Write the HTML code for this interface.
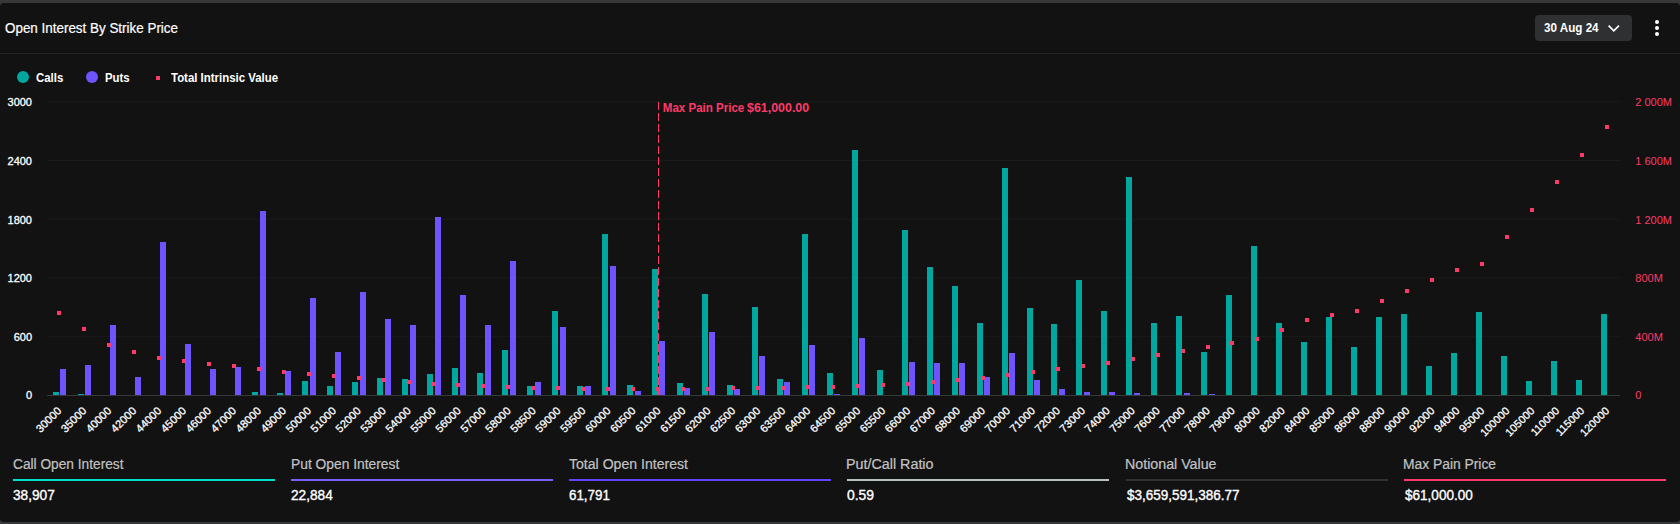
<!DOCTYPE html>
<html lang="en"><head><meta charset="utf-8"><title>Open Interest By Strike Price</title>
<style>
html,body{margin:0;padding:0;background:#37383a;overflow:hidden}
body{width:1680px;height:524px;position:relative;font-family:"Liberation Sans", Arial, sans-serif}
.card{position:absolute;left:0;top:3px;width:1680px;height:519px;background:#121212;border-radius:4px}
.wrap{position:absolute;left:0;top:0;width:1680px;height:524px}
.t{position:absolute;white-space:nowrap;line-height:20px;height:20px;transform-origin:0 50%}
.btn{position:absolute;left:1535px;top:15px;width:97px;height:26px;border-radius:4px;background:#2e3032}
.dot{position:absolute;left:1654.5px;width:4px;height:4px;border-radius:50%;background:#fff}
.hr{position:absolute;left:0;top:53px;width:1680px;height:1px;background:#232527}
.circ{position:absolute;width:12px;height:12px;border-radius:50%}
.med{stroke:#fff;stroke-width:0.3px}
</style></head>
<body>
<div class="card"></div>
<div class="wrap">
<div class="t" style="left:5px;top:18.15px;font-size:14px;font-weight:400;color:#fff;transform:scaleX(0.9584);-webkit-text-stroke:0.2px #fff;">Open Interest By Strike Price</div>
<div class="btn"></div>
<div class="t" style="left:1543.5px;top:17.54px;font-size:12px;font-weight:700;color:#fff;transform:scaleX(0.9708);">30 Aug 24</div>
<svg style="position:absolute;left:1605.6px;top:22px" width="16" height="14" viewBox="0 0 16 14"><path d="M2.6 3.6 L7.8 8.8 L13 3.6" fill="none" stroke="#fff" stroke-width="1.7"/></svg>
<div class="dot" style="top:20px"></div><div class="dot" style="top:26px"></div><div class="dot" style="top:32px"></div>
<div class="hr"></div>
<div class="circ" style="left:17px;top:71px;background:#00a79f"></div>
<div class="t" style="left:35.5px;top:67.84px;font-size:12px;font-weight:700;color:#fff;transform:scaleX(0.9518);">Calls</div>
<div class="circ" style="left:85.6px;top:71px;background:#6e54ff"></div>
<div class="t" style="left:104.5px;top:67.84px;font-size:12px;font-weight:700;color:#fff;transform:scaleX(0.9460);">Puts</div>
<div style="position:absolute;left:156px;top:76px;width:4px;height:4px;background:#fd3a69"></div>
<div class="t" style="left:171px;top:67.84px;font-size:12px;font-weight:700;color:#fff;transform:scaleX(0.9514);">Total Intrinsic Value</div>
<svg class="chart" width="1680" height="390" viewBox="0 60 1680 390" style="position:absolute;left:0;top:60px;font-family:'Liberation Sans',Arial,sans-serif">
<line x1="47.0" x2="1620.0" y1="101.90" y2="101.90" stroke="#1b1b1b" stroke-width="1"/>
<line x1="47.0" x2="1620.0" y1="160.50" y2="160.50" stroke="#1b1b1b" stroke-width="1"/>
<line x1="47.0" x2="1620.0" y1="219.10" y2="219.10" stroke="#1b1b1b" stroke-width="1"/>
<line x1="47.0" x2="1620.0" y1="277.70" y2="277.70" stroke="#1b1b1b" stroke-width="1"/>
<line x1="47.0" x2="1620.0" y1="336.30" y2="336.30" stroke="#1b1b1b" stroke-width="1"/>
<rect x="53" y="392" width="6" height="3.5" fill="#00a79f"/>
<rect x="60" y="369" width="6" height="26.5" fill="#6e54ff"/>
<rect x="78" y="394" width="6" height="1.5" fill="#00a79f"/>
<rect x="85" y="365" width="6" height="30.5" fill="#6e54ff"/>
<rect x="110" y="325" width="6" height="70.5" fill="#6e54ff"/>
<rect x="135" y="377" width="6" height="18.5" fill="#6e54ff"/>
<rect x="160" y="242" width="6" height="153.5" fill="#6e54ff"/>
<rect x="185" y="344" width="6" height="51.5" fill="#6e54ff"/>
<rect x="210" y="369" width="6" height="26.5" fill="#6e54ff"/>
<rect x="235" y="367" width="6" height="28.5" fill="#6e54ff"/>
<rect x="252" y="392" width="6" height="3.5" fill="#00a79f"/>
<rect x="260" y="211" width="6" height="184.5" fill="#6e54ff"/>
<rect x="277" y="393" width="6" height="2.5" fill="#00a79f"/>
<rect x="285" y="371" width="6" height="24.5" fill="#6e54ff"/>
<rect x="302" y="381" width="6" height="14.5" fill="#00a79f"/>
<rect x="310" y="298" width="6" height="97.5" fill="#6e54ff"/>
<rect x="327" y="386" width="6" height="9.5" fill="#00a79f"/>
<rect x="335" y="352" width="6" height="43.5" fill="#6e54ff"/>
<rect x="352" y="382" width="6" height="13.5" fill="#00a79f"/>
<rect x="360" y="292" width="6" height="103.5" fill="#6e54ff"/>
<rect x="377" y="378" width="6" height="17.5" fill="#00a79f"/>
<rect x="385" y="319" width="6" height="76.5" fill="#6e54ff"/>
<rect x="402" y="379" width="6" height="16.5" fill="#00a79f"/>
<rect x="410" y="325" width="6" height="70.5" fill="#6e54ff"/>
<rect x="427" y="374" width="6" height="21.5" fill="#00a79f"/>
<rect x="435" y="217" width="6" height="178.5" fill="#6e54ff"/>
<rect x="452" y="368" width="6" height="27.5" fill="#00a79f"/>
<rect x="460" y="295" width="6" height="100.5" fill="#6e54ff"/>
<rect x="477" y="373" width="6" height="22.5" fill="#00a79f"/>
<rect x="485" y="325" width="6" height="70.5" fill="#6e54ff"/>
<rect x="502" y="350" width="6" height="45.5" fill="#00a79f"/>
<rect x="510" y="261" width="6" height="134.5" fill="#6e54ff"/>
<rect x="527" y="386" width="6" height="9.5" fill="#00a79f"/>
<rect x="535" y="382" width="6" height="13.5" fill="#6e54ff"/>
<rect x="552" y="311" width="6" height="84.5" fill="#00a79f"/>
<rect x="560" y="327" width="6" height="68.5" fill="#6e54ff"/>
<rect x="577" y="386" width="6" height="9.5" fill="#00a79f"/>
<rect x="585" y="386" width="6" height="9.5" fill="#6e54ff"/>
<rect x="602" y="234" width="6" height="161.5" fill="#00a79f"/>
<rect x="610" y="266" width="6" height="129.5" fill="#6e54ff"/>
<rect x="627" y="385" width="6" height="10.5" fill="#00a79f"/>
<rect x="635" y="391" width="6" height="4.5" fill="#6e54ff"/>
<rect x="652" y="269" width="6" height="126.5" fill="#00a79f"/>
<rect x="659" y="341" width="6" height="54.5" fill="#6e54ff"/>
<rect x="677" y="383" width="6" height="12.5" fill="#00a79f"/>
<rect x="684" y="388" width="6" height="7.5" fill="#6e54ff"/>
<rect x="702" y="294" width="6" height="101.5" fill="#00a79f"/>
<rect x="709" y="332" width="6" height="63.5" fill="#6e54ff"/>
<rect x="727" y="385" width="6" height="10.5" fill="#00a79f"/>
<rect x="734" y="389" width="6" height="6.5" fill="#6e54ff"/>
<rect x="752" y="307" width="6" height="88.5" fill="#00a79f"/>
<rect x="759" y="356" width="6" height="39.5" fill="#6e54ff"/>
<rect x="777" y="379" width="6" height="16.5" fill="#00a79f"/>
<rect x="784" y="382" width="6" height="13.5" fill="#6e54ff"/>
<rect x="802" y="234" width="6" height="161.5" fill="#00a79f"/>
<rect x="809" y="345" width="6" height="50.5" fill="#6e54ff"/>
<rect x="827" y="373" width="6" height="22.5" fill="#00a79f"/>
<rect x="834" y="394" width="6" height="1.5" fill="#6e54ff"/>
<rect x="852" y="150" width="6" height="245.5" fill="#00a79f"/>
<rect x="859" y="338" width="6" height="57.5" fill="#6e54ff"/>
<rect x="877" y="370" width="6" height="25.5" fill="#00a79f"/>
<rect x="902" y="230" width="6" height="165.5" fill="#00a79f"/>
<rect x="909" y="362" width="6" height="33.5" fill="#6e54ff"/>
<rect x="927" y="267" width="6" height="128.5" fill="#00a79f"/>
<rect x="934" y="363" width="6" height="32.5" fill="#6e54ff"/>
<rect x="952" y="286" width="6" height="109.5" fill="#00a79f"/>
<rect x="959" y="363" width="6" height="32.5" fill="#6e54ff"/>
<rect x="977" y="323" width="6" height="72.5" fill="#00a79f"/>
<rect x="984" y="377" width="6" height="18.5" fill="#6e54ff"/>
<rect x="1002" y="168" width="6" height="227.5" fill="#00a79f"/>
<rect x="1009" y="353" width="6" height="42.5" fill="#6e54ff"/>
<rect x="1027" y="308" width="6" height="87.5" fill="#00a79f"/>
<rect x="1034" y="380" width="6" height="15.5" fill="#6e54ff"/>
<rect x="1051" y="324" width="6" height="71.5" fill="#00a79f"/>
<rect x="1059" y="389" width="6" height="6.5" fill="#6e54ff"/>
<rect x="1076" y="280" width="6" height="115.5" fill="#00a79f"/>
<rect x="1084" y="392" width="6" height="3.5" fill="#6e54ff"/>
<rect x="1101" y="311" width="6" height="84.5" fill="#00a79f"/>
<rect x="1109" y="392" width="6" height="3.5" fill="#6e54ff"/>
<rect x="1126" y="177" width="6" height="218.5" fill="#00a79f"/>
<rect x="1134" y="393" width="6" height="2.5" fill="#6e54ff"/>
<rect x="1151" y="323" width="6" height="72.5" fill="#00a79f"/>
<rect x="1176" y="316" width="6" height="79.5" fill="#00a79f"/>
<rect x="1184" y="393" width="6" height="2.5" fill="#6e54ff"/>
<rect x="1201" y="352" width="6" height="43.5" fill="#00a79f"/>
<rect x="1209" y="394" width="6" height="1.5" fill="#6e54ff"/>
<rect x="1226" y="295" width="6" height="100.5" fill="#00a79f"/>
<rect x="1251" y="246" width="6" height="149.5" fill="#00a79f"/>
<rect x="1276" y="323" width="6" height="72.5" fill="#00a79f"/>
<rect x="1301" y="342" width="6" height="53.5" fill="#00a79f"/>
<rect x="1326" y="317" width="6" height="78.5" fill="#00a79f"/>
<rect x="1351" y="347" width="6" height="48.5" fill="#00a79f"/>
<rect x="1376" y="317" width="6" height="78.5" fill="#00a79f"/>
<rect x="1401" y="314" width="6" height="81.5" fill="#00a79f"/>
<rect x="1426" y="366" width="6" height="29.5" fill="#00a79f"/>
<rect x="1451" y="353" width="6" height="42.5" fill="#00a79f"/>
<rect x="1476" y="312" width="6" height="83.5" fill="#00a79f"/>
<rect x="1501" y="356" width="6" height="39.5" fill="#00a79f"/>
<rect x="1526" y="381" width="6" height="14.5" fill="#00a79f"/>
<rect x="1551" y="361" width="6" height="34.5" fill="#00a79f"/>
<rect x="1576" y="380" width="6" height="15.5" fill="#00a79f"/>
<rect x="1601" y="314" width="6" height="81.5" fill="#00a79f"/>
<line x1="47.0" x2="1620.0" y1="395.5" y2="395.5" stroke="#383838" stroke-width="1"/>
<rect x="57" y="311" width="4" height="4" fill="#fd3a69"/>
<rect x="82" y="327" width="4" height="4" fill="#fd3a69"/>
<rect x="107" y="343" width="4" height="4" fill="#fd3a69"/>
<rect x="132" y="350" width="4" height="4" fill="#fd3a69"/>
<rect x="157" y="356" width="4" height="4" fill="#fd3a69"/>
<rect x="182" y="359" width="4" height="4" fill="#fd3a69"/>
<rect x="207" y="362" width="4" height="4" fill="#fd3a69"/>
<rect x="232" y="364" width="4" height="4" fill="#fd3a69"/>
<rect x="257" y="367" width="4" height="4" fill="#fd3a69"/>
<rect x="282" y="370" width="4" height="4" fill="#fd3a69"/>
<rect x="307" y="372" width="4" height="4" fill="#fd3a69"/>
<rect x="332" y="374" width="4" height="4" fill="#fd3a69"/>
<rect x="357" y="376" width="4" height="4" fill="#fd3a69"/>
<rect x="382" y="378" width="4" height="4" fill="#fd3a69"/>
<rect x="407" y="380" width="4" height="4" fill="#fd3a69"/>
<rect x="432" y="382" width="4" height="4" fill="#fd3a69"/>
<rect x="456" y="383" width="4" height="4" fill="#fd3a69"/>
<rect x="481" y="384" width="4" height="4" fill="#fd3a69"/>
<rect x="506" y="385" width="4" height="4" fill="#fd3a69"/>
<rect x="531" y="386" width="4" height="4" fill="#fd3a69"/>
<rect x="556" y="386" width="4" height="4" fill="#fd3a69"/>
<rect x="581" y="387" width="4" height="4" fill="#fd3a69"/>
<rect x="606" y="387" width="4" height="4" fill="#fd3a69"/>
<rect x="631" y="387" width="4" height="4" fill="#fd3a69"/>
<rect x="656" y="387" width="4" height="4" fill="#fd3a69"/>
<rect x="681" y="387" width="4" height="4" fill="#fd3a69"/>
<rect x="706" y="387" width="4" height="4" fill="#fd3a69"/>
<rect x="731" y="386" width="4" height="4" fill="#fd3a69"/>
<rect x="756" y="386" width="4" height="4" fill="#fd3a69"/>
<rect x="781" y="386" width="4" height="4" fill="#fd3a69"/>
<rect x="806" y="385" width="4" height="4" fill="#fd3a69"/>
<rect x="831" y="385" width="4" height="4" fill="#fd3a69"/>
<rect x="856" y="384" width="4" height="4" fill="#fd3a69"/>
<rect x="881" y="383" width="4" height="4" fill="#fd3a69"/>
<rect x="906" y="382" width="4" height="4" fill="#fd3a69"/>
<rect x="931" y="380" width="4" height="4" fill="#fd3a69"/>
<rect x="956" y="378" width="4" height="4" fill="#fd3a69"/>
<rect x="981" y="376" width="4" height="4" fill="#fd3a69"/>
<rect x="1006" y="373" width="4" height="4" fill="#fd3a69"/>
<rect x="1031" y="370" width="4" height="4" fill="#fd3a69"/>
<rect x="1056" y="367" width="4" height="4" fill="#fd3a69"/>
<rect x="1081" y="364" width="4" height="4" fill="#fd3a69"/>
<rect x="1106" y="361" width="4" height="4" fill="#fd3a69"/>
<rect x="1131" y="357" width="4" height="4" fill="#fd3a69"/>
<rect x="1156" y="353" width="4" height="4" fill="#fd3a69"/>
<rect x="1181" y="349" width="4" height="4" fill="#fd3a69"/>
<rect x="1206" y="345" width="4" height="4" fill="#fd3a69"/>
<rect x="1230" y="341" width="4" height="4" fill="#fd3a69"/>
<rect x="1255" y="337" width="4" height="4" fill="#fd3a69"/>
<rect x="1280" y="328" width="4" height="4" fill="#fd3a69"/>
<rect x="1305" y="318" width="4" height="4" fill="#fd3a69"/>
<rect x="1330" y="313" width="4" height="4" fill="#fd3a69"/>
<rect x="1355" y="309" width="4" height="4" fill="#fd3a69"/>
<rect x="1380" y="299" width="4" height="4" fill="#fd3a69"/>
<rect x="1405" y="289" width="4" height="4" fill="#fd3a69"/>
<rect x="1430" y="278" width="4" height="4" fill="#fd3a69"/>
<rect x="1455" y="268" width="4" height="4" fill="#fd3a69"/>
<rect x="1480" y="262" width="4" height="4" fill="#fd3a69"/>
<rect x="1505" y="235" width="4" height="4" fill="#fd3a69"/>
<rect x="1530" y="208" width="4" height="4" fill="#fd3a69"/>
<rect x="1555" y="180" width="4" height="4" fill="#fd3a69"/>
<rect x="1580" y="153" width="4" height="4" fill="#fd3a69"/>
<rect x="1605" y="125" width="4" height="4" fill="#fd3a69"/>
<line x1="658.5" x2="658.5" y1="102" y2="395" stroke="#fd3a69" stroke-width="1" stroke-dasharray="8 3"/>
<text y="112" fill="#fd3a69" font-size="12" font-weight="700"><tspan x="662.8" textLength="81.5" lengthAdjust="spacingAndGlyphs">Max Pain Price</tspan><tspan x="743.6" textLength="65.6" lengthAdjust="spacingAndGlyphs"> $61,000.00</tspan></text>
<text x="32" y="106" fill="#fff" font-size="11" text-anchor="end" class="med">3000</text>
<text x="32" y="165" fill="#fff" font-size="11" text-anchor="end" class="med">2400</text>
<text x="32" y="224" fill="#fff" font-size="11" text-anchor="end" class="med">1800</text>
<text x="32" y="282" fill="#fff" font-size="11" text-anchor="end" class="med">1200</text>
<text x="32" y="341" fill="#fff" font-size="11" text-anchor="end" class="med">600</text>
<text x="32" y="399" fill="#fff" font-size="11" text-anchor="end" class="med">0</text>
<text x="1635.3" y="106" fill="#fd3a69" font-size="11">2 000M</text>
<text x="1635.3" y="165" fill="#fd3a69" font-size="11">1 600M</text>
<text x="1635.3" y="224" fill="#fd3a69" font-size="11">1 200M</text>
<text x="1635.3" y="282" fill="#fd3a69" font-size="11">800M</text>
<text x="1635.3" y="341" fill="#fd3a69" font-size="11">400M</text>
<text x="1635.3" y="399" fill="#fd3a69" font-size="11">0</text>
<text x="62.10" y="411.5" fill="#fff" font-size="11" text-anchor="end" class="med" transform="rotate(-45 62.10 411.5)">30000</text>
<text x="87.07" y="411.5" fill="#fff" font-size="11" text-anchor="end" class="med" transform="rotate(-45 87.07 411.5)">35000</text>
<text x="112.03" y="411.5" fill="#fff" font-size="11" text-anchor="end" class="med" transform="rotate(-45 112.03 411.5)">40000</text>
<text x="137.00" y="411.5" fill="#fff" font-size="11" text-anchor="end" class="med" transform="rotate(-45 137.00 411.5)">42000</text>
<text x="161.97" y="411.5" fill="#fff" font-size="11" text-anchor="end" class="med" transform="rotate(-45 161.97 411.5)">44000</text>
<text x="186.93" y="411.5" fill="#fff" font-size="11" text-anchor="end" class="med" transform="rotate(-45 186.93 411.5)">45000</text>
<text x="211.90" y="411.5" fill="#fff" font-size="11" text-anchor="end" class="med" transform="rotate(-45 211.90 411.5)">46000</text>
<text x="236.87" y="411.5" fill="#fff" font-size="11" text-anchor="end" class="med" transform="rotate(-45 236.87 411.5)">47000</text>
<text x="261.83" y="411.5" fill="#fff" font-size="11" text-anchor="end" class="med" transform="rotate(-45 261.83 411.5)">48000</text>
<text x="286.80" y="411.5" fill="#fff" font-size="11" text-anchor="end" class="med" transform="rotate(-45 286.80 411.5)">49000</text>
<text x="311.77" y="411.5" fill="#fff" font-size="11" text-anchor="end" class="med" transform="rotate(-45 311.77 411.5)">50000</text>
<text x="336.73" y="411.5" fill="#fff" font-size="11" text-anchor="end" class="med" transform="rotate(-45 336.73 411.5)">51000</text>
<text x="361.70" y="411.5" fill="#fff" font-size="11" text-anchor="end" class="med" transform="rotate(-45 361.70 411.5)">52000</text>
<text x="386.67" y="411.5" fill="#fff" font-size="11" text-anchor="end" class="med" transform="rotate(-45 386.67 411.5)">53000</text>
<text x="411.63" y="411.5" fill="#fff" font-size="11" text-anchor="end" class="med" transform="rotate(-45 411.63 411.5)">54000</text>
<text x="436.60" y="411.5" fill="#fff" font-size="11" text-anchor="end" class="med" transform="rotate(-45 436.60 411.5)">55000</text>
<text x="461.57" y="411.5" fill="#fff" font-size="11" text-anchor="end" class="med" transform="rotate(-45 461.57 411.5)">56000</text>
<text x="486.53" y="411.5" fill="#fff" font-size="11" text-anchor="end" class="med" transform="rotate(-45 486.53 411.5)">57000</text>
<text x="511.50" y="411.5" fill="#fff" font-size="11" text-anchor="end" class="med" transform="rotate(-45 511.50 411.5)">58000</text>
<text x="536.47" y="411.5" fill="#fff" font-size="11" text-anchor="end" class="med" transform="rotate(-45 536.47 411.5)">58500</text>
<text x="561.43" y="411.5" fill="#fff" font-size="11" text-anchor="end" class="med" transform="rotate(-45 561.43 411.5)">59000</text>
<text x="586.40" y="411.5" fill="#fff" font-size="11" text-anchor="end" class="med" transform="rotate(-45 586.40 411.5)">59500</text>
<text x="611.37" y="411.5" fill="#fff" font-size="11" text-anchor="end" class="med" transform="rotate(-45 611.37 411.5)">60000</text>
<text x="636.33" y="411.5" fill="#fff" font-size="11" text-anchor="end" class="med" transform="rotate(-45 636.33 411.5)">60500</text>
<text x="661.30" y="411.5" fill="#fff" font-size="11" text-anchor="end" class="med" transform="rotate(-45 661.30 411.5)">61000</text>
<text x="686.27" y="411.5" fill="#fff" font-size="11" text-anchor="end" class="med" transform="rotate(-45 686.27 411.5)">61500</text>
<text x="711.23" y="411.5" fill="#fff" font-size="11" text-anchor="end" class="med" transform="rotate(-45 711.23 411.5)">62000</text>
<text x="736.20" y="411.5" fill="#fff" font-size="11" text-anchor="end" class="med" transform="rotate(-45 736.20 411.5)">62500</text>
<text x="761.17" y="411.5" fill="#fff" font-size="11" text-anchor="end" class="med" transform="rotate(-45 761.17 411.5)">63000</text>
<text x="786.13" y="411.5" fill="#fff" font-size="11" text-anchor="end" class="med" transform="rotate(-45 786.13 411.5)">63500</text>
<text x="811.10" y="411.5" fill="#fff" font-size="11" text-anchor="end" class="med" transform="rotate(-45 811.10 411.5)">64000</text>
<text x="836.07" y="411.5" fill="#fff" font-size="11" text-anchor="end" class="med" transform="rotate(-45 836.07 411.5)">64500</text>
<text x="861.03" y="411.5" fill="#fff" font-size="11" text-anchor="end" class="med" transform="rotate(-45 861.03 411.5)">65000</text>
<text x="886.00" y="411.5" fill="#fff" font-size="11" text-anchor="end" class="med" transform="rotate(-45 886.00 411.5)">65500</text>
<text x="910.97" y="411.5" fill="#fff" font-size="11" text-anchor="end" class="med" transform="rotate(-45 910.97 411.5)">66000</text>
<text x="935.93" y="411.5" fill="#fff" font-size="11" text-anchor="end" class="med" transform="rotate(-45 935.93 411.5)">67000</text>
<text x="960.90" y="411.5" fill="#fff" font-size="11" text-anchor="end" class="med" transform="rotate(-45 960.90 411.5)">68000</text>
<text x="985.87" y="411.5" fill="#fff" font-size="11" text-anchor="end" class="med" transform="rotate(-45 985.87 411.5)">69000</text>
<text x="1010.83" y="411.5" fill="#fff" font-size="11" text-anchor="end" class="med" transform="rotate(-45 1010.83 411.5)">70000</text>
<text x="1035.80" y="411.5" fill="#fff" font-size="11" text-anchor="end" class="med" transform="rotate(-45 1035.80 411.5)">71000</text>
<text x="1060.77" y="411.5" fill="#fff" font-size="11" text-anchor="end" class="med" transform="rotate(-45 1060.77 411.5)">72000</text>
<text x="1085.73" y="411.5" fill="#fff" font-size="11" text-anchor="end" class="med" transform="rotate(-45 1085.73 411.5)">73000</text>
<text x="1110.70" y="411.5" fill="#fff" font-size="11" text-anchor="end" class="med" transform="rotate(-45 1110.70 411.5)">74000</text>
<text x="1135.67" y="411.5" fill="#fff" font-size="11" text-anchor="end" class="med" transform="rotate(-45 1135.67 411.5)">75000</text>
<text x="1160.63" y="411.5" fill="#fff" font-size="11" text-anchor="end" class="med" transform="rotate(-45 1160.63 411.5)">76000</text>
<text x="1185.60" y="411.5" fill="#fff" font-size="11" text-anchor="end" class="med" transform="rotate(-45 1185.60 411.5)">77000</text>
<text x="1210.57" y="411.5" fill="#fff" font-size="11" text-anchor="end" class="med" transform="rotate(-45 1210.57 411.5)">78000</text>
<text x="1235.53" y="411.5" fill="#fff" font-size="11" text-anchor="end" class="med" transform="rotate(-45 1235.53 411.5)">79000</text>
<text x="1260.50" y="411.5" fill="#fff" font-size="11" text-anchor="end" class="med" transform="rotate(-45 1260.50 411.5)">80000</text>
<text x="1285.47" y="411.5" fill="#fff" font-size="11" text-anchor="end" class="med" transform="rotate(-45 1285.47 411.5)">82000</text>
<text x="1310.43" y="411.5" fill="#fff" font-size="11" text-anchor="end" class="med" transform="rotate(-45 1310.43 411.5)">84000</text>
<text x="1335.40" y="411.5" fill="#fff" font-size="11" text-anchor="end" class="med" transform="rotate(-45 1335.40 411.5)">85000</text>
<text x="1360.37" y="411.5" fill="#fff" font-size="11" text-anchor="end" class="med" transform="rotate(-45 1360.37 411.5)">86000</text>
<text x="1385.34" y="411.5" fill="#fff" font-size="11" text-anchor="end" class="med" transform="rotate(-45 1385.34 411.5)">88000</text>
<text x="1410.30" y="411.5" fill="#fff" font-size="11" text-anchor="end" class="med" transform="rotate(-45 1410.30 411.5)">90000</text>
<text x="1435.27" y="411.5" fill="#fff" font-size="11" text-anchor="end" class="med" transform="rotate(-45 1435.27 411.5)">92000</text>
<text x="1460.24" y="411.5" fill="#fff" font-size="11" text-anchor="end" class="med" transform="rotate(-45 1460.24 411.5)">94000</text>
<text x="1485.20" y="411.5" fill="#fff" font-size="11" text-anchor="end" class="med" transform="rotate(-45 1485.20 411.5)">95000</text>
<text x="1510.17" y="411.5" fill="#fff" font-size="10.8" text-anchor="end" class="med" transform="rotate(-45 1510.17 411.5)">100000</text>
<text x="1535.14" y="411.5" fill="#fff" font-size="10.8" text-anchor="end" class="med" transform="rotate(-45 1535.14 411.5)">105000</text>
<text x="1560.10" y="411.5" fill="#fff" font-size="10.8" text-anchor="end" class="med" transform="rotate(-45 1560.10 411.5)">110000</text>
<text x="1585.07" y="411.5" fill="#fff" font-size="10.8" text-anchor="end" class="med" transform="rotate(-45 1585.07 411.5)">115000</text>
<text x="1610.04" y="411.5" fill="#fff" font-size="10.8" text-anchor="end" class="med" transform="rotate(-45 1610.04 411.5)">120000</text>
</svg>
<div class="t" style="left:13px;top:454.35px;font-size:14px;font-weight:400;color:#c2c2c2;transform:scaleX(0.9793);-webkit-text-stroke:0.2px #c2c2c2;">Call Open Interest</div>
<div style="position:absolute;left:13px;top:479px;width:262px;height:2px;background:#00dfcd"></div>
<div class="t" style="left:13.4px;top:485.15px;font-size:14px;font-weight:400;color:#fff;transform:scaleX(0.9762);-webkit-text-stroke:0.35px #fff;">38,907</div>
<div class="t" style="left:290.6px;top:454.35px;font-size:14px;font-weight:400;color:#c2c2c2;transform:scaleX(0.9870);-webkit-text-stroke:0.2px #c2c2c2;">Put Open Interest</div>
<div style="position:absolute;left:291px;top:479px;width:262px;height:2px;background:#7b5cff"></div>
<div class="t" style="left:291.4px;top:485.15px;font-size:14px;font-weight:400;color:#fff;transform:scaleX(0.9762);-webkit-text-stroke:0.35px #fff;">22,884</div>
<div class="t" style="left:569px;top:454.35px;font-size:14px;font-weight:400;color:#c2c2c2;transform:scaleX(1.0060);-webkit-text-stroke:0.2px #c2c2c2;">Total Open Interest</div>
<div style="position:absolute;left:569px;top:479px;width:262px;height:2px;background:#6640ff"></div>
<div class="t" style="left:569.4px;top:485.15px;font-size:14px;font-weight:400;color:#fff;transform:scaleX(0.9528);-webkit-text-stroke:0.35px #fff;">61,791</div>
<div class="t" style="left:846.4px;top:454.35px;font-size:14px;font-weight:400;color:#c2c2c2;transform:scaleX(1.0223);-webkit-text-stroke:0.2px #c2c2c2;">Put/Call Ratio</div>
<div style="position:absolute;left:847px;top:479px;width:262px;height:2px;background:#b8bfc0"></div>
<div class="t" style="left:847.4px;top:485.15px;font-size:14px;font-weight:400;color:#fff;transform:scaleX(0.9909);-webkit-text-stroke:0.35px #fff;">0.59</div>
<div class="t" style="left:1125.4px;top:454.35px;font-size:14px;font-weight:400;color:#c2c2c2;transform:scaleX(1.0164);-webkit-text-stroke:0.2px #c2c2c2;">Notional Value</div>
<div style="position:absolute;left:1126px;top:479px;width:262px;height:2px;background:#303234"></div>
<div class="t" style="left:1126.9px;top:485.15px;font-size:14px;font-weight:400;color:#fff;transform:scaleX(0.9642);-webkit-text-stroke:0.35px #fff;">$3,659,591,386.77</div>
<div class="t" style="left:1403.4px;top:454.35px;font-size:14px;font-weight:400;color:#c2c2c2;transform:scaleX(0.9878);-webkit-text-stroke:0.2px #c2c2c2;">Max Pain Price</div>
<div style="position:absolute;left:1404px;top:479px;width:262px;height:2px;background:#fd3a69"></div>
<div class="t" style="left:1404.9px;top:485.15px;font-size:14px;font-weight:400;color:#fff;transform:scaleX(0.9676);-webkit-text-stroke:0.35px #fff;">$61,000.00</div>
</div>
</body></html>
